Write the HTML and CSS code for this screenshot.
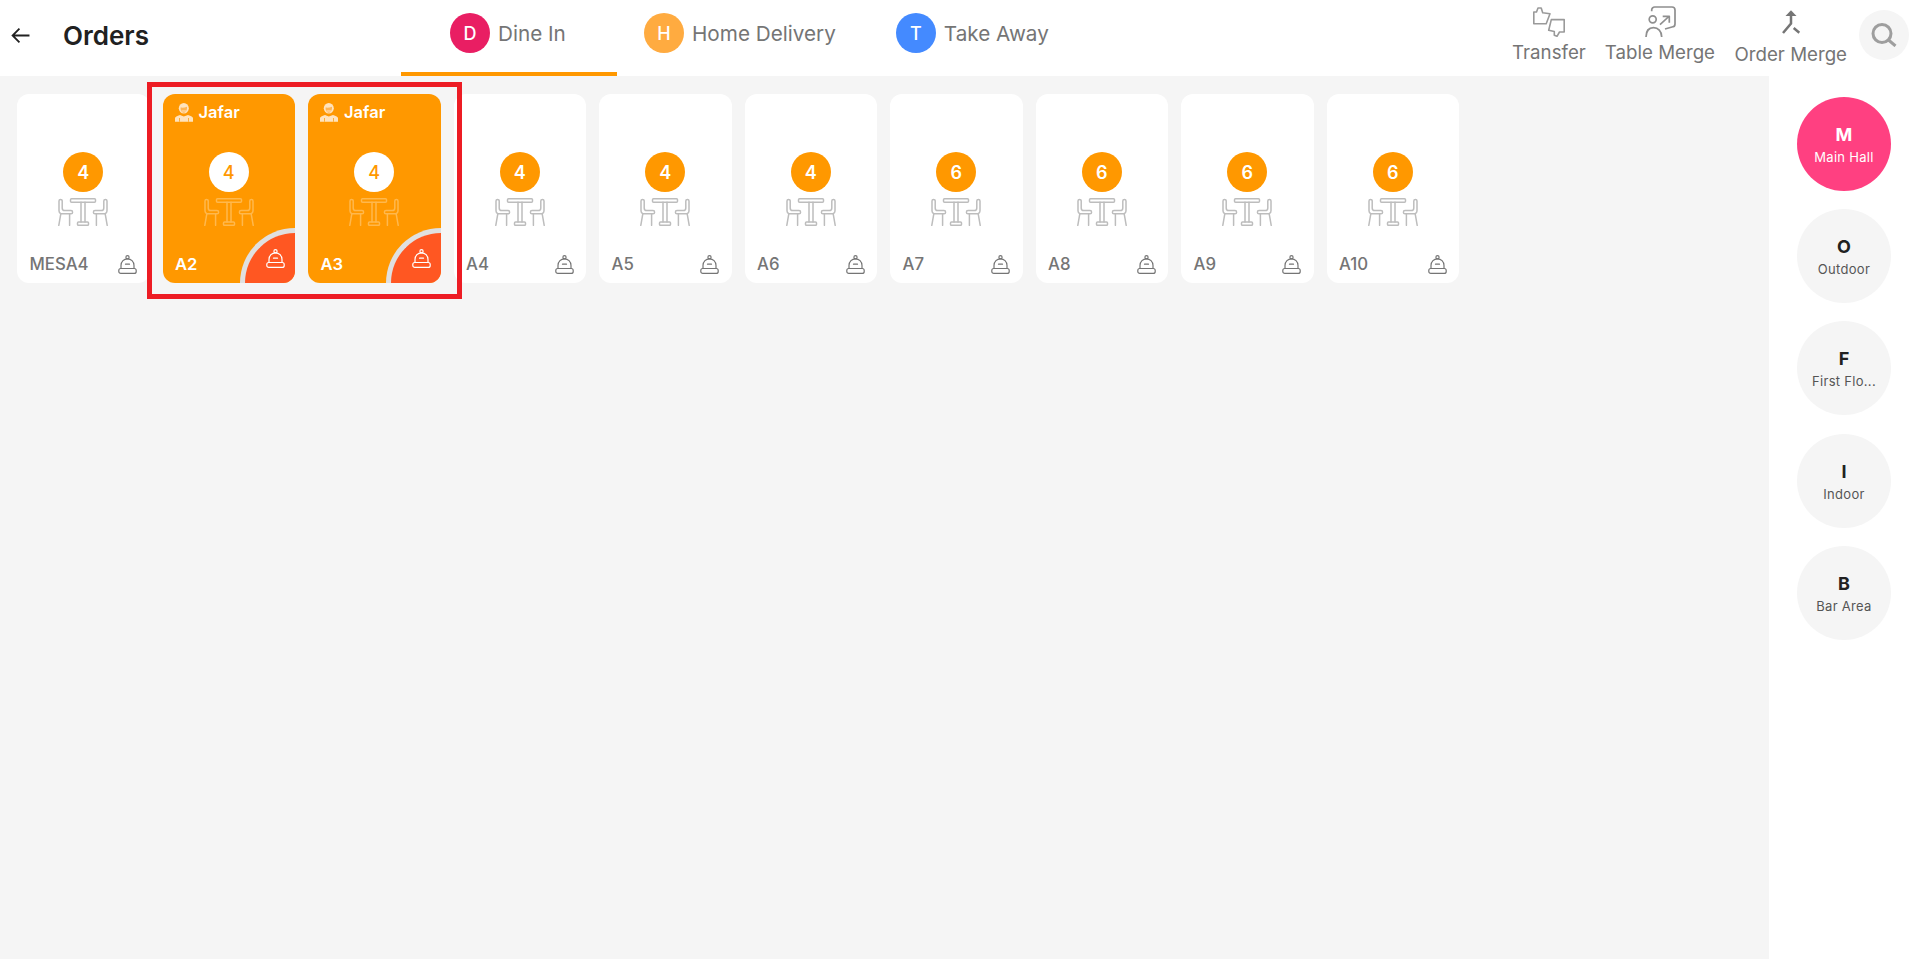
FILE: index.html
```html
<!DOCTYPE html>
<html lang="en">
<head>
<meta charset="utf-8">
<title>Orders</title>
<link rel="stylesheet" href="styles.css">
</head>
<body>
<svg class="defs" width="0" height="0" aria-hidden="true">
  <defs>
    <symbol id="table" viewBox="0 0 50 28">
      <g fill="none" stroke="currentColor" stroke-width="1.500" stroke-linejoin="round" stroke-linecap="round">
        <rect x="12.5" y="0.8" width="25" height="3.400" rx="1"/>
        <path d="M23 4.200V24M27 4.200V24"/>
        <rect x="19.5" y="24" width="11" height="3.300" rx="1"/>
        <path d="M1 3a1.6 1.6 0 0 1 3.2 0v7q0 2.6 2.6 2.6H13a1.6 1.6 0 0 1 0 3.2H4.6Q1 15.8 1 12.4Z"/>
        <path d="M2.8 15.8 0.8 27.3M11.6 15.8V27.3"/>
        <path d="M49 3a1.6 1.6 0 0 0-3.2 0v7q0 2.6-2.6 2.6H37a1.6 1.6 0 0 0 0 3.2h8.4Q49 15.800 49 12.4Z"/>
        <path d="M47.2 15.8 49.2 27.3M38.4 15.8V27.3"/>
      </g>
    </symbol>
    <symbol id="cloche" viewBox="0 0 19 19">
      <g fill="none" stroke="currentColor" stroke-width="1.200" stroke-linejoin="round" stroke-linecap="round">
        <circle cx="9.500" cy="2.300" r="1.600"/>
        <path d="M3 13.500V10.500C3 6.500 6 3.800 9.500 3.800S16 6.500 16 10.500V13.500"/>
        <path d="M7.500 9.200h4"/>
        <rect x="0.800" y="13.500" width="17.400" height="4.900" rx="2"/>
      </g>
    </symbol>
    <symbol id="waiter" viewBox="0 0 18 19">
      <ellipse cx="8.800" cy="5.200" rx="5" ry="5.200" fill="currentColor"/>
      <path fill="#ffb555" d="M5.600 4.600c1.800.3 4.400.1 6.400-.9.300 2.800-1 6-3.200 6S5.400 7.200 5.600 4.600Z"/>
      <path fill="currentColor" d="M6.500 7.400h4.600v1H6.500Z"/>
      <path fill="currentColor" d="M0 18.700V15.200c0-1.500 2-2.500 5-3.300l3.800 1.600 4.200-1.600c3 .8 5 1.800 5 3.300v3.500Z"/>
      <path d="M4.500 15v3.700M13.500 15v3.700" stroke="#ff9800" stroke-width="0.700" fill="none"/>
    </symbol>
  </defs>
</svg>

<header class="topbar">
  <div class="title-group">
    <svg class="back" viewBox="0 0 18 16" width="19" height="17"><path d="M17.500 8H1.500M8 1.500 1.500 8 8 14.500" fill="none" stroke="#212121" stroke-width="1.700"/></svg>
    <h1 class="title">Orders</h1>
  </div>
  <nav class="tabs">
    <div class="tab tab-active"><span class="avatar avatar-d">D</span><span>Dine In</span></div>
    <div class="tab tab-home"><span class="avatar avatar-h">H</span><span>Home Delivery</span></div>
    <div class="tab"><span class="avatar avatar-t">T</span><span>Take Away</span></div>
  </nav>
  <div class="tools">
    <div class="tool tool-transfer">
      <svg class="tool-icon" viewBox="0 0 32 30" width="32" height="30"><g fill="none" stroke="#9a9a9a" stroke-width="1.600" stroke-linejoin="round"><path d="M.8 5H3.500L5 1H8.200L9.700 5.800 17 6.800 13.200 16.700H.8Z"/><path d="M31.200 12.600V25H26.500L24 29.300 21.300 28.300V24.500L15.700 23.300 18.300 12.600Z"/></g></svg>
      <span>Transfer</span>
    </div>
    <div class="tool tool-table">
      <svg class="tool-icon" viewBox="0 0 32 30" width="32" height="30"><g fill="none" stroke="#8f8f8f" stroke-width="1.700" stroke-linejoin="round"><path d="M7.700 5.300V4A3 3 0 0 1 10.700 1H28A3 3 0 0 1 31 4V18A3 3 0 0 1 28 21L21 23"/><circle cx="8.700" cy="13.300" r="3.500"/><path d="M2 31C2 25 5 21.700 9.500 21.700S17.700 25 17.700 31"/><path d="M16 18.700 24.300 11M18.700 10.300H25.300V16.700"/></g></svg>
      <span>Table Merge</span>
    </div>
    <div class="tool tool-order">
      <svg class="tool-icon" viewBox="0 0 32 30" width="32" height="30"><path fill="#757575" d="M16 1.300 21.500 7H10.500Z"/><path d="M16 6V14.500L8 24M18.700 19 24.300 23.700" fill="none" stroke="#757575" stroke-width="2.500"/></svg>
      <span>Order Merge</span>
    </div>
    <button class="search" type="button" aria-label="Search"><svg viewBox="0 0 26 24" width="26" height="24"><circle cx="11" cy="10.500" r="9" fill="none" stroke="#9e9e9e" stroke-width="3"/><path d="M17.500 17 24.500 23" stroke="#9e9e9e" stroke-width="3" fill="none"/></svg></button>
  </div>
</header>

<div class="main">
  <section class="board">
    <div class="grid">
      <article class="card">
        <div class="card-head"></div>
        <div class="seats">4</div>
        <svg class="table-icon"><use href="#table"/></svg>
        <div class="card-foot"><span class="card-name">MESA4</span><svg class="cloche"><use href="#cloche"/></svg></div>
      </article>
      <article class="card card-busy">
        <div class="card-head"><svg class="waiter"><use href="#waiter"/></svg><span>Jafar</span></div>
        <div class="seats">4</div>
        <svg class="table-icon"><use href="#table"/></svg>
        <div class="card-foot"><span class="card-name">A2</span></div>
        <div class="corner"><svg class="cloche"><use href="#cloche"/></svg></div>
      </article>
      <article class="card card-busy">
        <div class="card-head"><svg class="waiter"><use href="#waiter"/></svg><span>Jafar</span></div>
        <div class="seats">4</div>
        <svg class="table-icon"><use href="#table"/></svg>
        <div class="card-foot"><span class="card-name">A3</span></div>
        <div class="corner"><svg class="cloche"><use href="#cloche"/></svg></div>
      </article>
      <article class="card">
        <div class="card-head"></div>
        <div class="seats">4</div>
        <svg class="table-icon"><use href="#table"/></svg>
        <div class="card-foot"><span class="card-name">A4</span><svg class="cloche"><use href="#cloche"/></svg></div>
      </article>
      <article class="card">
        <div class="card-head"></div>
        <div class="seats">4</div>
        <svg class="table-icon"><use href="#table"/></svg>
        <div class="card-foot"><span class="card-name">A5</span><svg class="cloche"><use href="#cloche"/></svg></div>
      </article>
      <article class="card">
        <div class="card-head"></div>
        <div class="seats">4</div>
        <svg class="table-icon"><use href="#table"/></svg>
        <div class="card-foot"><span class="card-name">A6</span><svg class="cloche"><use href="#cloche"/></svg></div>
      </article>
      <article class="card">
        <div class="card-head"></div>
        <div class="seats">6</div>
        <svg class="table-icon"><use href="#table"/></svg>
        <div class="card-foot"><span class="card-name">A7</span><svg class="cloche"><use href="#cloche"/></svg></div>
      </article>
      <article class="card">
        <div class="card-head"></div>
        <div class="seats">6</div>
        <svg class="table-icon"><use href="#table"/></svg>
        <div class="card-foot"><span class="card-name">A8</span><svg class="cloche"><use href="#cloche"/></svg></div>
      </article>
      <article class="card">
        <div class="card-head"></div>
        <div class="seats">6</div>
        <svg class="table-icon"><use href="#table"/></svg>
        <div class="card-foot"><span class="card-name">A9</span><svg class="cloche"><use href="#cloche"/></svg></div>
      </article>
      <article class="card">
        <div class="card-head"></div>
        <div class="seats">6</div>
        <svg class="table-icon"><use href="#table"/></svg>
        <div class="card-foot"><span class="card-name">A10</span><svg class="cloche"><use href="#cloche"/></svg></div>
      </article>
      <div class="highlight"></div>
    </div>
  </section>
  <aside class="areas">
    <div class="area area-active"><strong>M</strong><span>Main Hall</span></div>
    <div class="area"><strong>O</strong><span>Outdoor</span></div>
    <div class="area"><strong>F</strong><span>First Flo...</span></div>
    <div class="area"><strong>I</strong><span>Indoor</span></div>
    <div class="area"><strong>B</strong><span>Bar Area</span></div>
  </aside>
</div>
</body>
</html>
```
FILE: styles.css
```css
* { box-sizing: border-box; }
html, body { margin: 0; height: 100%; }
body {
  font-family: Inter, "Liberation Sans", sans-serif;
  background: #f5f5f5;
  overflow: hidden;
  display: flex;
  flex-direction: column;
}
.defs { display: block; height: 0; }

.topbar {
  height: 76px;
  flex: none;
  background: #fff;
  display: flex;
  align-items: stretch;
}
.title-group {
  width: 401px;
  flex: none;
  display: flex;
  align-items: center;
  padding: 0 0 6px 11px;
}
.back { display: block; flex: none; }
.title {
  margin: 0 0 0 33px;
  font-size: 26px;
  font-weight: 600;
  color: #212121;
}
.tabs { display: flex; align-items: stretch; }
.tab {
  display: flex;
  align-items: center;
  gap: 8px;
  height: 76px;
  padding-bottom: 10px;
  font-size: 20.700px;
  color: #757575;
}
.tab-active {
  width: 216px;
  padding-left: 49px;
  border-bottom: 4px solid #ff9800;
  padding-bottom: 6px;
}
.tab-home { margin: 0 60px 0 27px; }
.avatar {
  width: 40px;
  height: 40px;
  border-radius: 50%;
  display: flex;
  align-items: center;
  justify-content: center;
  color: #fff;
  font-size: 18px;
  font-weight: 500;
}
.avatar-d { background: #e91e63; }
.avatar-h { background: #ffab40; }
.avatar-t { background: #448aff; }

.tools {
  margin-left: auto;
  display: flex;
  align-items: flex-start;
  color: #757575;
  font-size: 18.700px;
}
.tool {
  display: flex;
  flex-direction: column;
  align-items: center;
  padding-top: 7px;
  white-space: nowrap;
}
.tool-icon { display: block; overflow: visible; }
.tool span { line-height: 22px; margin-top: 5px; }
.tool-transfer { margin-right: 19px; }
.tool-table { margin-right: 19.500px; padding-top: 6px; }
.tool-table span { margin-top: 6px; }
.tool-order { margin-right: 12px; padding-top: 9px; }
.search {
  width: 50px;
  height: 50px;
  margin: 10px 1px 0 0;
  border: 0;
  padding: 0;
  border-radius: 50%;
  background: #f5f5f5;
  display: flex;
  align-items: center;
  justify-content: center;
}

.main { flex: 1; display: flex; min-height: 0; }
.board { flex: 1; padding: 18px 0 0 17px; min-width: 0; }
.grid {
  position: relative;
  display: flex;
  gap: 13px;
}
.card {
  position: relative;
  width: 132.500px;
  height: 189px;
  flex: none;
  background: #fff;
  border-radius: 12px;
  overflow: hidden;
  display: flex;
  flex-direction: column;
  align-items: center;
}
.card-head {
  width: 100%;
  height: 58px;
  flex: none;
  display: flex;
  align-items: flex-start;
  gap: 6px;
  padding: 8px 0 0 12px;
  color: #fff;
  font-size: 16.500px;
  font-weight: 600;
  line-height: 21px;
}
.waiter {
  width: 18px;
  height: 19px;
  margin-top: 1px;
  color: #ffe3bd;
  flex: none;
}
.seats {
  width: 40px;
  height: 40px;
  flex: none;
  border-radius: 50%;
  background: #ff9800;
  color: #fff;
  font-size: 18px;
  font-weight: 600;
  display: flex;
  align-items: center;
  justify-content: center;
}
.table-icon {
  width: 50px;
  height: 28px;
  flex: none;
  margin-top: 6px;
  color: #bdbdbd;
}
.card-foot {
  width: 100%;
  margin-top: auto;
  height: 30px;
  flex: none;
  display: flex;
  align-items: flex-start;
  justify-content: space-between;
  padding: 0 12.500px;
}
.card-name {
  font-size: 16.800px;
  font-weight: 500;
  line-height: 22px;
  color: #757575;
}
.cloche {
  width: 19px;
  height: 19px;
  flex: none;
  color: #757575;
  margin-top: 2px;
}
.card-busy { background: #ff9800; }
.card-busy .seats { background: #fff; color: #ff9800; font-weight: 500; }
.card-busy .table-icon { color: #ffb84d; }
.card-busy .card-name { color: #fff; font-weight: 600; font-size: 16.600px; }
.corner {
  position: absolute;
  right: 0;
  bottom: 0;
  width: 55px;
  height: 55px;
  background: #ff5722;
  border: solid #e0e0e0;
  border-width: 5px 0 0 5px;
  border-top-left-radius: 55px;
  display: flex;
}
.corner .cloche {
  color: #fff;
  margin: 16px 0 0 21px;
}
.highlight {
  position: absolute;
  left: 130px;
  top: -12px;
  width: 315px;
  height: 217px;
  border: 5px solid #ed1c24;
  pointer-events: none;
}

.areas {
  width: 141px;
  flex: none;
  background: #fff;
  display: flex;
  flex-direction: column;
  align-items: flex-start;
  gap: 18.200px;
  padding: 21px 0 0 28px;
}
.area {
  width: 94px;
  height: 94px;
  border-radius: 50%;
  background: #f5f5f5;
  display: flex;
  flex-direction: column;
  align-items: center;
  justify-content: center;
  color: #555;
  font-size: 13px;
  padding-top: 2px;
}
.area strong {
  font-size: 18px;
  font-weight: 700;
  line-height: 24px;
  color: #212121;
}
.area span { line-height: 20px; letter-spacing: 0.300px; }
.area-active { background: #ff4081; color: #fff; }
.area-active strong { color: #fff; }
```
